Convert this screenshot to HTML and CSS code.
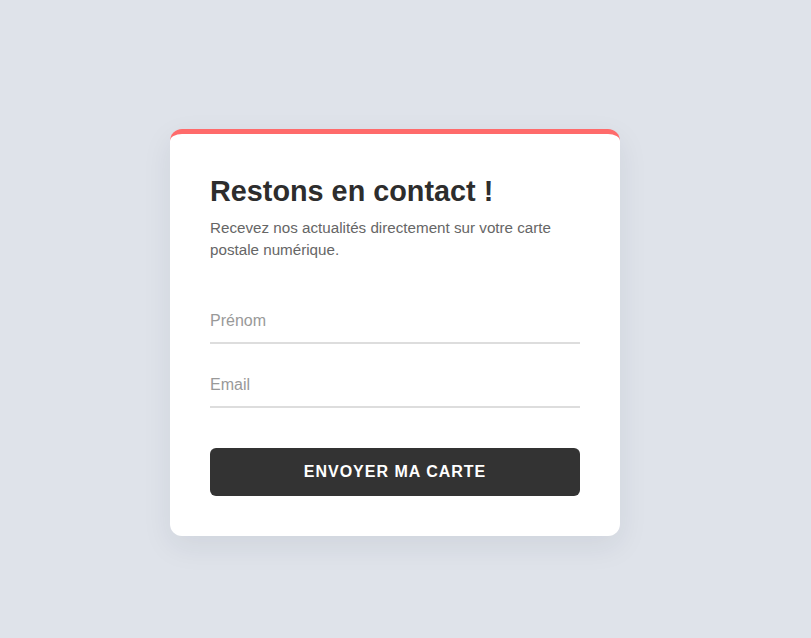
FILE: index.html
```html
<!DOCTYPE html>
<html lang="fr">
<head>
<meta charset="utf-8">
<title>Restons en contact</title>
<link rel="stylesheet" href="styles.css">
</head>
<body>
<main class="page">
  <section class="card">
    <h1 class="title">Restons en contact !</h1>
    <p class="subtitle">Recevez nos actualités directement sur votre carte postale numérique.</p>
    <form class="form">
      <input class="field" type="text" placeholder="Prénom">
      <input class="field" type="email" placeholder="Email">
      <button class="submit" type="button">Envoyer ma carte</button>
    </form>
  </section>
</main>
</body>
</html>
```

FILE: styles.css
```css
* { box-sizing: border-box; }
html, body { margin: 0; height: 100%; }
body {
  background: #dfe3ea;
  font-family: "Liberation Sans", Arial, sans-serif;
}
.page {
  display: flex;
  justify-content: center;
  align-items: flex-start;
  padding-top: 129px;
  padding-right: 21px;
}
.card {
  width: 450px;
  background: #fff;
  border-top: 5px solid #ff6b6b;
  border-radius: 12px;
  padding: 40px;
  box-shadow: 0 10px 30px rgba(30, 40, 60, 0.08);
}
.title {
  margin: 0 0 8px;
  font-size: 28.8px;
  line-height: 1.2;
  font-weight: 700;
  color: #2d2d2d;
}
.subtitle {
  margin: 0 0 39px;
  font-size: 15.2px;
  line-height: 22px;
  color: #666;
}
.form {
  display: flex;
  flex-direction: column;
}
.field {
  display: block;
  width: 100%;
  border: none;
  border-bottom: 2px solid #ddd;
  padding: 12px 0;
  font-family: inherit;
  font-size: 16px;
  line-height: 18px;
  color: #333;
  outline: none;
  background: transparent;
  margin-bottom: 20px;
}
.field::placeholder { color: #999; }
.submit {
  margin-top: 20px;
  height: 48px;
  border: none;
  border-radius: 6px;
  background: #333;
  color: #fff;
  font-family: inherit;
  font-size: 16px;
  font-weight: 700;
  letter-spacing: 1px;
  text-transform: uppercase;
  cursor: pointer;
}
```
